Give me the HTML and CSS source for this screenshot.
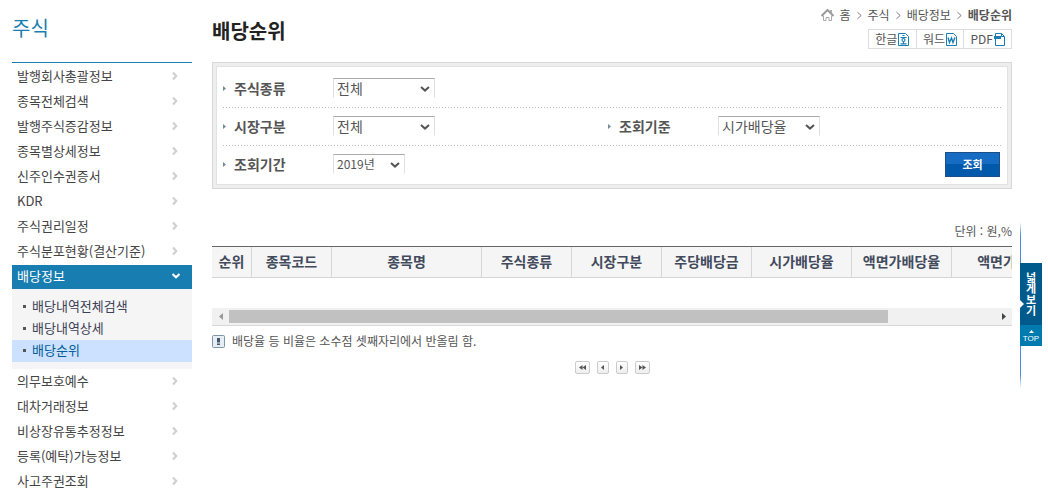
FILE: index.html
```
<!DOCTYPE html>
<html lang="ko">
<head>
<meta charset="utf-8">
<title>배당순위</title>
<link rel="stylesheet" href="styles.css">
</head>
<body>
<svg class="defs" aria-hidden="true">
  <symbol id="chev" viewBox="0 0 6 8"><path d="M1 0.5L4.2 4L1 7.500" fill="none" stroke="currentColor" stroke-width="2.200"/></symbol>
  <symbol id="gt" viewBox="0 0 6 10"><path d="M0.500 1L5 5L0.500 9" fill="none" stroke="currentColor"/></symbol>
  <symbol id="tri" viewBox="0 0 3 5"><path d="M0 0L3 2.500L0 5Z" fill="currentColor"/></symbol>
  <symbol id="down" viewBox="0 0 10 6"><path d="M1 1L5 4.600L9 1" fill="none" stroke="currentColor" stroke-width="2"/></symbol>
</svg>
<div class="page">
  <nav class="side">
    <h2 class="side-title">주식</h2>
    <ul class="menu">
      <li><a class="item" href="#">발행회사총괄정보<svg class="chev"><use href="#chev"/></svg></a></li>
      <li><a class="item" href="#">종목전체검색<svg class="chev"><use href="#chev"/></svg></a></li>
      <li><a class="item" href="#">발행주식증감정보<svg class="chev"><use href="#chev"/></svg></a></li>
      <li><a class="item" href="#">종목별상세정보<svg class="chev"><use href="#chev"/></svg></a></li>
      <li><a class="item" href="#">신주인수권증서<svg class="chev"><use href="#chev"/></svg></a></li>
      <li><a class="item" href="#">KDR<svg class="chev"><use href="#chev"/></svg></a></li>
      <li><a class="item" href="#">주식권리일정<svg class="chev"><use href="#chev"/></svg></a></li>
      <li><a class="item" href="#">주식분포현황(결산기준)<svg class="chev"><use href="#chev"/></svg></a></li>
      <li>
        <a class="item open" href="#">배당정보<svg class="chev-open" viewBox="0 0 8 6"><path d="M0.500 1L4 4.200L7.500 1" fill="none" stroke="#fff" stroke-width="2.200"/></svg></a>
        <ul class="submenu">
          <li><a class="subitem" href="#">배당내역전체검색</a></li>
          <li><a class="subitem" href="#">배당내역상세</a></li>
          <li><a class="subitem current" href="#">배당순위</a></li>
        </ul>
      </li>
      <li><a class="item" href="#">의무보호예수<svg class="chev"><use href="#chev"/></svg></a></li>
      <li><a class="item" href="#">대차거래정보<svg class="chev"><use href="#chev"/></svg></a></li>
      <li><a class="item" href="#">비상장유통추정정보<svg class="chev"><use href="#chev"/></svg></a></li>
      <li><a class="item" href="#">등록(예탁)가능정보<svg class="chev"><use href="#chev"/></svg></a></li>
      <li><a class="item" href="#">사고주권조회<svg class="chev"><use href="#chev"/></svg></a></li>
    </ul>
  </nav>

  <main class="main">
    <header class="head">
      <h1 class="title">배당순위</h1>
      <div class="head-right">
        <div class="crumbs">
          <svg class="home" viewBox="0 0 13 12"><path d="M0.500 7L6.500 1L12.500 7" fill="none" stroke="#999" stroke-width="2"/><path d="M9 1h2v4l-2-2z" fill="#aaa"/><path d="M2.500 6.500V11.500H5V8.500H8V11.500H10.500V6.500" fill="none" stroke="#aaa"/></svg>
          <a href="#">홈</a><svg class="gt"><use href="#gt"/></svg>
          <a href="#">주식</a><svg class="gt"><use href="#gt"/></svg>
          <a href="#">배당정보</a><svg class="gt"><use href="#gt"/></svg>
          <strong>배당순위</strong>
        </div>
        <div class="exports">
          <button type="button">한글<svg class="doc" viewBox="0 0 11 13"><path d="M0.500 0.500H7.500L10.500 3.500V12.500H0.500Z" fill="#fff" stroke="#1a7fb5"/><path d="M4.500 2.500H6.500M2.500 4.500H8.500M5.500 9V11M2.500 10.800H8.500" stroke="#1a7fb5" stroke-width="1.200"/><circle cx="5.500" cy="7" r="1.500" fill="none" stroke="#1a7fb5" stroke-width="1.200"/></svg></button>
          <button type="button">워드<svg class="doc" viewBox="0 0 11 13"><path d="M0.500 0.500H7.500L10.500 3.500V12.500H0.500Z" fill="#fff" stroke="#1a7fb5"/><path d="M2 4.500L3.500 9.500L5.500 5L7 9.500L9 4.500" fill="none" stroke="#1a7fb5" stroke-width="1.400"/></svg></button>
          <button type="button">PDF<svg class="doc" viewBox="0 0 11 13"><path d="M1.500 0.500H7.500L10.500 3.500V12.500H1.500Z" fill="#fff" stroke="#1a7fb5"/><path d="M7.500 0.500V3.500H10.500" fill="none" stroke="#1a7fb5"/><path d="M0 3H7V6H0Z" fill="#1a7fb5"/></svg></button>
        </div>
      </div>
    </header>

    <form class="search">
      <div class="search-in">
        <div class="row">
          <div class="field"><svg class="tri"><use href="#tri"/></svg><label for="kind">주식종류</label><span class="pick"><select id="kind"><option>전체</option></select><svg class="down"><use href="#down"/></svg></span></div>
        </div>
        <div class="row">
          <div class="field"><svg class="tri"><use href="#tri"/></svg><label for="market">시장구분</label><span class="pick"><select id="market"><option>전체</option></select><svg class="down"><use href="#down"/></svg></span></div>
          <div class="field"><svg class="tri"><use href="#tri"/></svg><label for="basis">조회기준</label><span class="pick"><select id="basis"><option>시가배당율</option></select><svg class="down"><use href="#down"/></svg></span></div>
        </div>
        <div class="row">
          <div class="field"><svg class="tri"><use href="#tri"/></svg><label for="year">조회기간</label><span class="pick year"><select id="year"><option>2019년</option></select><svg class="down"><use href="#down"/></svg></span></div>
          <button class="go" type="button">조회</button>
        </div>
      </div>
    </form>

    <p class="unit">단위 : 원,%</p>
    <div class="grid">
      <div class="grid-view">
        <table>
          <colgroup><col class="w40"><col class="w80"><col class="w150"><col class="w90"><col class="w90"><col class="w90"><col class="w100"><col class="w100"><col class="w90"><col class="w100"></colgroup>
          <thead><tr><th>순위</th><th>종목코드</th><th>종목명</th><th>주식종류</th><th>시장구분</th><th>주당배당금</th><th>시가배당율</th><th>액면가배당율</th><th>액면가</th><th></th></tr></thead>
        </table>
      </div>
      <div class="hscroll">
        <button type="button" class="dim" aria-label="왼쪽"><svg viewBox="0 0 4 7"><path d="M4 0V7L0 3.500Z" fill="currentColor"/></svg></button>
        <div class="track"><div class="thumb"></div></div>
        <button type="button" aria-label="오른쪽"><svg viewBox="0 0 4 7"><path d="M0 0V7L4 3.500Z" fill="currentColor"/></svg></button>
      </div>
    </div>
    <p class="note"><svg class="info" viewBox="0 0 13 13"><rect x="0.500" y="0.500" width="12" height="12" rx="1" fill="#e6edf4" stroke="#7f95a8"/><path d="M5 3H8V7.500H5ZM5 8.500H8V10H5Z" fill="#43566a"/></svg>배당율 등 비율은 소수점 셋째자리에서 반올림 함.</p>
    <div class="pager">
      <button type="button" class="wide" aria-label="처음"><svg viewBox="0 0 7 5"><path d="M3.500 0V5L0 2.500ZM7 0V5L3.500 2.500Z" fill="#555"/></svg></button>
      <button type="button" aria-label="이전"><svg viewBox="0 0 7 5"><path d="M5 0V5L2 2.500Z" fill="#555"/></svg></button>
      <button type="button" aria-label="다음"><svg viewBox="0 0 7 5"><path d="M2 0V5L5 2.500Z" fill="#555"/></svg></button>
      <button type="button" class="wide" aria-label="마지막"><svg viewBox="0 0 7 5"><path d="M0 0V5L3.500 2.500ZM3.500 0V5L7 2.500Z" fill="#555"/></svg></button>
    </div>
  </main>

  <aside class="quick">
    <button type="button" class="wideview"><svg class="notch" viewBox="0 0 4 8"><path d="M0 0L4 4L0 8Z" fill="#fff"/></svg><span class="vertical">넓게보기</span></button>
    <a class="top" href="#"><svg viewBox="0 0 5 3"><path d="M2.500 0L5 3H0Z" fill="#fff"/></svg>TOP</a>
  </aside>
</div>
</body>
</html>
```
FILE: styles.css
```
* { box-sizing: border-box; }
html { scrollbar-width: none; }
body {
  margin: 0;
  background: #fff;
  color: #555;
  font-family: "Noto Sans CJK KR", sans-serif;
  font-size: 12px;
}
h1, h2, p, ul { margin: 0; padding: 0; }
ul { list-style: none; }
a { color: inherit; text-decoration: none; }
button, select { font-family: inherit; color: inherit; }
button { cursor: pointer; padding: 0; }
svg { display: block; flex: none; }
.defs { position: absolute; width: 0; height: 0; }

.page { display: flex; padding: 0 6px 0 12px; }

/* left menu */
.side { flex: none; width: 180px; margin-right: 20px; }
.side-title {
  height: 63px;
  padding-top: 14px;
  border-bottom: 1px solid #1a7eb0;
  color: #1a7eb0;
  font-size: 20px;
  font-weight: 400;
  line-height: 28px;
}
.menu { padding-top: 1px; }
.item {
  display: flex;
  align-items: center;
  justify-content: space-between;
  padding: 0 14px 2px 5px;
  color: #444;
  font-size: 13px;
  line-height: 23px;
}
.chev { width: 6px; height: 8px; color: #d0d0d0; }
.item.open {
  margin-top: 1px;
  padding-right: 12px;
  background: #187db0;
  color: #fff;
  line-height: 22px;
}
.chev-open { width: 8px; height: 6px; }
.submenu { padding: 7px 0; background: #f5f5f5; }
.subitem {
  display: flex;
  align-items: center;
  gap: 6px;
  padding: 0 0 2px 11px;
  color: #3b4156;
  font-size: 13px;
  line-height: 20px;
}
.subitem::before { content: ""; width: 3px; height: 3px; background: #555; }
.subitem.current { background: #cce1ff; color: #005c99; }

/* heading */
.main { flex: 1; min-width: 0; }
.head { display: flex; justify-content: space-between; height: 62px; }
.title { padding-top: 17px; color: #222; font-size: 20px; line-height: 28px; }
.head-right { padding-top: 6px; }
.crumbs { display: flex; align-items: center; justify-content: flex-end; gap: 6px; line-height: 18px; }
.home { width: 13px; height: 12px; }
.gt { width: 5px; height: 9px; color: #666; }
.exports { display: flex; justify-content: flex-end; margin-top: 5px; border: 1px solid #ddd; width: 144px; margin-left: auto; }
.exports button {
  display: flex;
  flex: 1;
  align-items: center;
  justify-content: center;
  gap: 1px;
  height: 18px;
  border: 0;
  background: #fff;
  font-size: 12px;
  line-height: 18px;
}
.exports button + button { border-left: 1px solid #ddd; }
.doc { width: 11px; height: 13px; }

/* search form */
.search { padding: 3px; border: 1px solid #d8d8d8; background: #eee; }
.search-in { padding: 3px 6px 0; border: 1px solid #e2e2e2; background: #fff; }
.row {
  display: flex;
  align-items: center;
  height: 38px;
  padding: 0 1px 2px 0;
  background: repeating-linear-gradient(90deg, #bbb 0 1px, transparent 1px 3px) bottom / 100% 1px no-repeat;
}
.row:last-child { background: none; }
.field { display: flex; align-items: center; flex: 0 0 385px; }
.tri { width: 3px; height: 5px; margin-right: 8px; color: #778899; }
.field label { width: 99px; font-size: 14px; font-weight: 700; line-height: 20px; }
.pick { position: relative; width: 102px; }
.pick.year { width: 72px; }
.pick select {
  display: block;
  width: 100%;
  height: 20px;
  padding: 0 3px;
  appearance: none;
  border: 1px solid #e0e0e0;
  border-top-color: #aaa;
  border-bottom-color: #fff;
  border-radius: 0;
  background: #fff;
  font-size: 14px;
  line-height: 18px;
}
.pick.year select { font-size: 12px; }
.down { position: absolute; right: 5px; top: 8px; width: 10px; height: 6px; color: #555; pointer-events: none; }
.go {
  width: 55px;
  height: 25px;
  margin-left: auto;
  border: 1px solid #1b4f88;
  background: linear-gradient(#156cc2 50%, #0059aa 50%);
  color: #fff;
  font-size: 11px;
  font-weight: 700;
  line-height: 20px;
}

/* result grid */
.unit { padding-top: 33px; text-align: right; line-height: 18px; }
.grid { margin-top: 6px; border-top: 1px solid #666; border-bottom: 1px solid #d8d8d8; }
.grid-view { overflow: hidden; height: 61px; }
table { width: 930px; table-layout: fixed; border-collapse: separate; border-spacing: 0; }
th {
  height: 31px;
  padding: 0 0 2px;
  border-right: 1px solid #d6d6d6;
  border-bottom: 1px solid #d6d6d6;
  background: #f5f5f5;
  color: #424a5c;
  font-size: 14px;
  line-height: 20px;
  white-space: nowrap;
}
.w40 { width: 40px; }
.w80 { width: 80px; }
.w90 { width: 90px; }
.w100 { width: 100px; }
.w150 { width: 150px; }
.hscroll { display: flex; height: 17px; background: #f1f1f1; }
.hscroll button { display: grid; place-items: center; width: 17px; border: 0; background: none; color: #444; }
.hscroll button.dim { color: #999; }
.hscroll button svg { width: 4px; height: 7px; }
.track { flex: 1; padding: 2px 0; }
.thumb { width: 86%; height: 13px; background: #c1c1c1; }

.note { display: flex; align-items: center; gap: 7px; padding-top: 6px; line-height: 18px; }
.info { width: 13px; height: 13px; }
.pager { display: flex; justify-content: center; gap: 7px; margin-top: 11px; }
.pager button {
  display: grid;
  place-items: center;
  width: 12px;
  height: 13px;
  border: 1px solid #ccc;
  border-radius: 2px;
  background: linear-gradient(#fff, #eee);
}
.pager button.wide { width: 15px; }
.pager svg { width: 7px; height: 5px; }

/* quick bar */
.quick {
  align-self: flex-start;
  flex: none;
  width: 22px;
  margin: 222px 0 0 8px;
  padding: 41px 0 42px;
  background: linear-gradient(transparent, #4a8ad4 8%, #4a8ad4 92%, transparent) left / 1px 100% no-repeat;
}
.wideview {
  position: relative;
  display: flex;
  align-items: center;
  justify-content: center;
  width: 100%;
  height: 62px;
  border: 0;
  background: #005a8c;
  color: #fff;
  font-size: 11px;
  font-weight: 700;
  line-height: 18px;
}
.vertical { writing-mode: vertical-rl; text-orientation: upright; }
.notch { position: absolute; left: 0; top: 37px; width: 4px; height: 8px; }
.top {
  display: flex;
  flex-direction: column;
  align-items: center;
  height: 21px;
  padding-top: 5px;
  background: #007bb0;
  color: #fff;
  font: 8px/12px "Liberation Sans", sans-serif;
}
.top svg { width: 5px; height: 3px; }
```
